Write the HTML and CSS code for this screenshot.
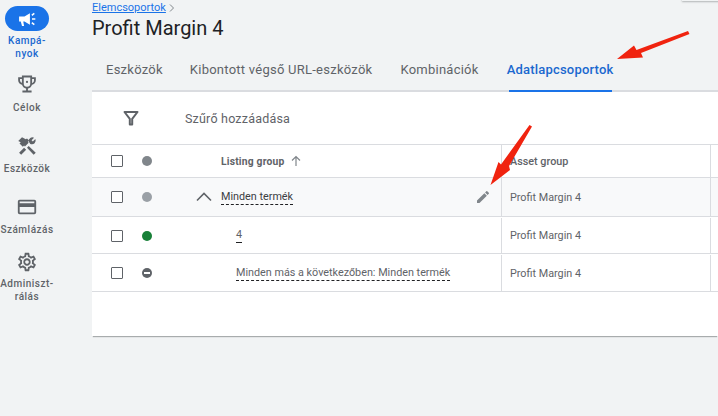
FILE: index.html
```html
<!DOCTYPE html>
<html lang="hu">
<head>
<meta charset="utf-8">
<title>Profit Margin 4</title>
<link rel="stylesheet" href="styles.css">
</head>
<body>
<div class="app">
  <nav class="rail">
    <div class="rail-item rail-active">
      <span class="pill">
        <svg width="20" height="20" viewBox="0 0 24 24" fill="#fff"><path d="M2.500 9v6h2l1.500 5.500h2.500L7.500 15H9l6.500 4V5L9 9z"/><path d="M18 11h4v2h-4zM17.300 6.700l3-2.200 1 1.600-3 2.200zM17.300 17.300l3 2.200 1-1.600-3-2.200z"/></svg>
      </span>
      <span class="rail-label">Kampá-<br>nyok</span>
    </div>
    <div class="rail-item item-goal">
      <svg width="20" height="20" viewBox="0 0 24 24" fill="none" stroke="#5f6368" stroke-width="2.200"><path d="M7 3h10v8.500a5 5 0 0 1-10 0z"/><path d="M7 5H2.500v2.500A4.500 4.500 0 0 0 7 12M17 5h4.500v2.500A4.500 4.500 0 0 1 17 12M12 16.500V20M6.500 21h11"/><circle cx="12" cy="9.500" r="1.300" fill="#5f6368" stroke="none"/></svg>
      <span class="rail-label">Célok</span>
    </div>
    <div class="rail-item item-tools">
      <svg width="20" height="20" viewBox="0 0 24 24" fill="#5f6368"><path d="M1.500 6 6 1.500l4.500 2.500L12 3l2.500 2.500L13 7l1 1-4.500 4.500-1-1L7 13 3 9l1.500-1.500z"/><path d="m8.500 14 2.500 2.500-6 6L2.500 20zM14 12l8.500 8-2.500 2.500-8-8.500z"/><path d="M14 6.500a4.500 4.500 0 0 1 6.500-4.500l-3 3 1.500 1.500 3-3a4.500 4.500 0 0 1-6 6z"/></svg>
      <span class="rail-label">Eszközök</span>
    </div>
    <div class="rail-item item-bill">
      <svg width="22" height="22" viewBox="0 0 24 24" fill="#5f6368"><path d="M20 4H4a2 2 0 0 0-2 2v12a2 2 0 0 0 2 2h16a2 2 0 0 0 2-2V6a2 2 0 0 0-2-2zm0 14H4v-6h16zm0-10H4V6h16z"/></svg>
      <span class="rail-label">Számlázás</span>
    </div>
    <div class="rail-item item-admin">
      <svg width="22" height="22" viewBox="0 0 24 24" fill="#5f6368"><path d="M19.430 12.980c.04-.32.070-.64.070-.98s-.03-.66-.07-.98l2.110-1.650c.19-.15.240-.42.120-.64l-2-3.460c-.12-.22-.39-.3-.61-.22l-2.490 1c-.52-.4-1.080-.73-1.690-.98l-.38-2.650A.488.488 0 0 0 14 2h-4c-.25 0-.46.180-.49.420l-.38 2.650c-.61.250-1.170.59-1.690.98l-2.490-1c-.23-.09-.49 0-.61.220l-2 3.460c-.13.220-.07.490.12.640l2.110 1.650c-.04.320-.07.650-.07.980s.03.660.07.980l-2.110 1.650c-.19.150-.24.420-.12.640l2 3.460c.12.220.39.300.61.220l2.490-1c.52.400 1.080.730 1.690.980l.38 2.650c.03.240.24.420.49.420h4c.25 0 .46-.18.49-.42l.38-2.650c.61-.25 1.170-.59 1.690-.98l2.490 1c.23.090.49 0 .61-.22l2-3.460c.12-.22.070-.49-.12-.64l-2.110-1.650zM17.450 11.270c.04.310.05.520.05.730s-.02.430-.05.730l-.14 1.130.89.700 1.080.840-.7 1.210-1.270-.51-1.040-.42-.9.680c-.43.320-.84.560-1.250.73l-1.060.43-.16 1.130-.2 1.350h-1.400l-.19-1.350-.16-1.130-1.060-.43c-.43-.18-.83-.41-1.230-.71l-.91-.7-1.060.43-1.270.51-.7-1.210 1.080-.84.890-.7-.14-1.130c-.03-.31-.05-.54-.05-.74s.02-.43.05-.73l.14-1.130-.89-.7-1.080-.84.700-1.210 1.270.51 1.040.42.900-.68c.43-.32.840-.56 1.250-.73l1.060-.43.160-1.130.2-1.350h1.390l.19 1.350.16 1.130 1.060.43c.43.180.83.410 1.230.71l.91.700 1.060-.43 1.270-.51.700 1.210-1.070.85-.89.700.14 1.130zM12 8c-2.210 0-4 1.790-4 4s1.790 4 4 4 4-1.790 4-4-1.790-4-4-4zm0 6c-1.100 0-2-.9-2-2s.9-2 2-2 2 .9 2 2-.9 2-2 2z"/></svg>
      <span class="rail-label">Adminiszt-<br>rálás</span>
    </div>
  </nav>
  <main class="content">
    <header class="head">
      <div class="crumb"><a class="crumb-link">Elemcsoportok</a><svg class="crumb-chev" width="8" height="10" viewBox="0 0 8 10" fill="none" stroke="#80868b" stroke-width="1"><path d="m2 1.500 3.500 3.500L2 8.500"/></svg></div>
      <h1 class="title">Profit Margin 4</h1>
    </header>
    <div class="tabs">
      <span class="tab">Eszközök</span>
      <span class="tab">Kibontott végső URL-eszközök</span>
      <span class="tab">Kombinációk</span>
      <span class="tab tab-active">Adatlapcsoportok</span>
    </div>
    <section class="panel">
      <div class="filter">
        <svg class="filter-icon" width="18" height="18" viewBox="0 0 18 18" fill="none" stroke="#5f6368" stroke-width="2"><path d="M2.500 3h13L10.200 9.800V15.500H7.800V9.800z" stroke-linejoin="round"/></svg>
        <span class="filter-text">Szűrő hozzáadása</span>
      </div>
      <div class="row row-head">
        <span class="c-check"><i class="box"></i></span>
        <span class="c-dot"><i class="dot dot-head"></i></span>
        <span class="c-chev"></span>
        <span class="c-name c-name-head">Listing group
          <svg width="12" height="12" viewBox="0 0 12 12" fill="none" stroke="#80868b" stroke-width="1.200"><path d="M6 11V2M2 5.500 6 1.500l4 4"/></svg>
        </span>
        <span class="c-asset asset-head">Asset group</span>
        <span class="c-end"></span>
      </div>
      <div class="row row-1">
        <span class="c-check"><i class="box"></i></span>
        <span class="c-dot"><i class="dot dot-grey"></i></span>
        <span class="c-chev"><svg width="16" height="10" viewBox="0 0 16 10" fill="none" stroke="#5f6368" stroke-width="1.600"><path d="m1 8.500 7-7 7 7"/></svg></span>
        <span class="c-name"><span class="dashed">Minden termék</span>
          <svg class="pencil" width="16" height="16" viewBox="0 0 24 24" fill="#80868b"><path d="M3 17.250V21h3.750L17.810 9.940l-3.750-3.750zM20.710 7.040a1 1 0 0 0 0-1.410l-2.340-2.340a1 1 0 0 0-1.410 0l-1.830 1.830 3.750 3.750z"/></svg>
        </span>
        <span class="c-asset">Profit Margin 4</span>
        <span class="c-end"></span>
      </div>
      <div class="row row-2">
        <span class="c-check"><i class="box"></i></span>
        <span class="c-dot"><i class="dot dot-green"></i></span>
        <span class="c-chev"></span>
        <span class="c-name c-indent"><span class="dashed solid">4</span></span>
        <span class="c-asset">Profit Margin 4</span>
        <span class="c-end"></span>
      </div>
      <div class="row row-3">
        <span class="c-check"><i class="box"></i></span>
        <span class="c-dot"><i class="dot dot-minus"></i></span>
        <span class="c-chev"></span>
        <span class="c-name c-indent"><span class="dashed">Minden más a következőben: Minden termék</span></span>
        <span class="c-asset">Profit Margin 4</span>
        <span class="c-end"></span>
      </div>
    </section>
  </main>
</div>
<div class="corner-card"></div>
<svg class="arrows" width="718" height="416" viewBox="0 0 718 416">
  <path fill="#f0230f" d="M688 31l1.500 3-48.500 19 2 4.500L617 59l17-13.500 2.500 4.500z"/>
  <path fill="#f0230f" d="M529.500 125l2.500 1.500-23 39.500 1 4-19.500 15 8-23 2.500 2.500z"/>
</svg>
</body>
</html>
```

FILE: styles.css
```css
* { box-sizing: border-box; }
html, body { margin: 0; padding: 0; }
body {
  width: 718px;
  height: 416px;
  overflow: hidden;
  background: #f1f3f4;
  font-family: Roboto, "Liberation Sans", sans-serif;
  color: #3c4043;
  position: relative;
}
.app { display: flex; height: 416px; }
.rail {
  width: 92px;
  flex: none;
  display: flex;
  flex-direction: column;
  padding-top: 6px;
}
.rail-item {
  width: 54px;
  display: flex;
  flex-direction: column;
  align-items: center;
  text-align: center;
}
.rail-label {
  font-size: 10px;
  line-height: 13px;
  font-weight: 500;
  letter-spacing: .5px;
  color: #5f6368;
  white-space: nowrap;
}
.rail-active .rail-label { color: #1a68cf; margin-top: 3px; }
.pill {
  width: 44px;
  height: 25px;
  border-radius: 13px;
  background: #1a73e8;
  display: flex;
  align-items: center;
  justify-content: center;
}
.item-goal { margin-top: 14px; }
.item-goal .rail-label { margin-top: 7px; }
.item-tools { margin-top: 22px; }
.item-tools .rail-label { margin-top: 6px; }
.item-bill { margin-top: 21px; }
.item-bill .rail-label { margin-top: 5px; }
.item-admin { margin-top: 15px; }
.item-admin .rail-label { margin-top: 4px; }

.content { flex: 1; min-width: 0; }
.head { height: 53px; padding-top: 1px; }
.crumb { display: flex; align-items: center; gap: 2px; height: 13px; }
.crumb-link {
  font-size: 11px;
  color: #1a73e8;
  text-decoration: underline;
}
.title {
  margin: 1px 0 0;
  font-size: 20px;
  line-height: 26px;
  font-weight: 400;
  color: #202124;
}
.tabs {
  height: 39px;
  display: flex;
  gap: 28px;
  padding-left: 14px;
  border-bottom: 2px solid #dadce0;
}
.tab {
  font-size: 13px;
  font-weight: 400;
  letter-spacing: .25px;
  line-height: 34px;
  color: #5f6368;
  white-space: nowrap;
}
.tab:first-child { margin-right: -1px; }
.tab-active {
  color: #1a68cf;
  font-weight: 500;
  height: 39px;
  letter-spacing: .2px;
  position: relative;
}
.tab-active::after {
  content: "";
  position: absolute;
  left: 2px;
  right: 2px;
  bottom: 0;
  height: 2px;
  background: #1a73e8;
}
.panel {
  height: 244px;
  background: #fff;
  box-shadow: 0 2px 1px -1px rgba(60, 64, 67, .4);
}
.filter {
  height: 52px;
  display: flex;
  align-items: center;
  padding-left: 30px;
}
.filter-icon { flex: none; }
.filter-text {
  margin-left: 45px;
  font-size: 12.500px;
  letter-spacing: .2px;
  color: #5f6368;
  padding-top: 1px;
}
.row {
  display: flex;
  align-items: stretch;
  border-bottom: 1px solid #dadce0;
  font-size: 10.800px;
  color: #5f6368;
}
.row > span { display: flex; align-items: center; }
.row-head { height: 34px; border-top: 1px solid #dadce0; }
.row-1 { height: 39px; background: #f8f9fa; }
.row-2 { height: 37px; padding-top: 1px; }
.row-3 { height: 38px; padding-top: 1px; }
.c-check { width: 50px; flex: none; padding-left: 19px; }
.c-dot { width: 49px; flex: none; }
.c-chev { width: 30px; flex: none; padding-left: 5px; }
.c-name {
  width: 281px;
  flex: none;
  color: #3c4043;
  border-right: 1px solid #dadce0;
  padding-right: 10px;
  justify-content: space-between;
}
.c-name-head { font-weight: 700; font-size: 10.300px; letter-spacing: .2px; color: #5f6368; justify-content: flex-start; gap: 6px; }
.c-indent { padding-left: 15px; color: #5f6368; }
.c-asset {
  width: 209px;
  flex: none;
  padding-left: 8px;
  border-right: 1px solid #dadce0;
}
.asset-head { font-weight: 500; color: #5f6368; }
.c-end { flex: 1; }
.box {
  display: block;
  width: 12px;
  height: 12px;
  border: 1px solid #5f6368;
  border-radius: 1px;
  background: #fff;
}
.dot {
  display: block;
  width: 10px;
  height: 10px;
  border-radius: 50%;
}
.dot-head { background: #80868b; }
.dot-grey { background: #9aa0a6; }
.dot-green { background: #188038; }
.dot-minus { background: #5f6368; position: relative; }
.dot-minus::after {
  content: "";
  position: absolute;
  left: 2px;
  right: 2px;
  top: 4px;
  height: 2px;
  background: #fff;
}
.dashed { border-bottom: 1px dashed #202124; line-height: 13px; padding-bottom: 1px; white-space: nowrap; }
.solid { border-bottom-style: solid; }
.pencil { flex: none; }
.corner-card {
  position: absolute;
  left: 682px;
  top: -6px;
  width: 50px;
  height: 7px;
  background: #f1f3f4;
  box-shadow: 0 1px 2px rgba(60, 64, 67, .35);
}
.arrows { position: absolute; left: 0; top: 0; pointer-events: none; }
```
